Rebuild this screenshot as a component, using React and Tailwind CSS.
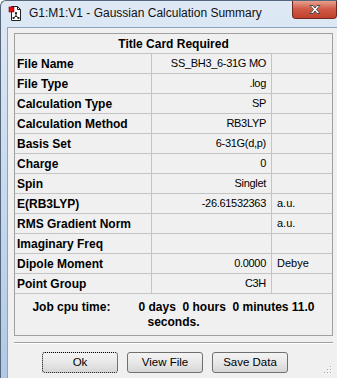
const ROWS = [
  { label: 'File Name', value: 'SS_BH3_6-31G MO', unit: '' },
  { label: 'File Type', value: '.log', unit: '' },
  { label: 'Calculation Type', value: 'SP', unit: '' },
  { label: 'Calculation Method', value: 'RB3LYP', unit: '' },
  { label: 'Basis Set', value: '6-31G(d,p)', unit: '' },
  { label: 'Charge', value: '0', unit: '' },
  { label: 'Spin', value: 'Singlet', unit: '' },
  { label: 'E(RB3LYP)', value: '-26.61532363', unit: 'a.u.' },
  { label: 'RMS Gradient Norm', value: '', unit: 'a.u.' },
  { label: 'Imaginary Freq', value: '', unit: '' },
  { label: 'Dipole Moment', value: '0.0000', unit: 'Debye' },
  { label: 'Point Group', value: 'C3H', unit: '' },
];

function FileIcon() {
  return (
    <svg width="16" height="16" viewBox="0 0 16 16">
      <path d="M3.5 1.5h6l3 3v11h-9z" fill="#fff" stroke="#222" />
      <path d="M9.5 1.5v3h3" fill="none" stroke="#222" />
      <rect x="1" y="2" width="5" height="5" fill="#e01010" stroke="#7a0000" strokeWidth="0.6" />
      <path d="M8 8v3M8 11l-2.5 2M8 11l2.5 2" fill="none" stroke="#111" />
      <circle cx="8" cy="8" r="1.1" fill="#111" />
      <circle cx="5.5" cy="13" r="1.1" fill="#111" />
      <circle cx="10.5" cy="13" r="1.1" fill="#111" />
    </svg>
  );
}

function CloseX() {
  return (
    <svg width="14" height="11" viewBox="0 0 14 11">
      <path
        d="M2 1.5h3l2 2.5 2-2.5h3l-3.5 4 3.5 4h-3l-2-2.5-2 2.5h-3l3.5-4z"
        fill="#fff"
        stroke="#4a4a4a"
        strokeWidth="1"
        strokeLinejoin="round"
      />
    </svg>
  );
}

function Grip() {
  const dots = [[8, 0], [8, 3], [5, 3], [8, 6], [5, 6], [2, 6]];
  return (
    <svg width="11" height="9" viewBox="0 0 11 9" className="absolute right-[4px] bottom-[3px]">
      {dots.map(([x, y], i) => (
        <g key={i}>
          <rect x={x + 1} y={y + 1} width="1" height="1" fill="#fff" />
          <rect x={x} y={y} width="1" height="1" fill="#a8a8a8" />
        </g>
      ))}
    </svg>
  );
}

function Btn({ children, focus }) {
  return (
    <button
      className={`w-[76px] h-[21px] rounded-[3px] border text-[11.5px] leading-none text-black bg-gradient-to-b from-[#f3f3f3] via-[#e8e8e8] to-[#d6d6d6] ${focus ? 'border-dotted border-black' : 'border-[#707070]'}`}
    >
      {children}
    </button>
  );
}

export default function App() {
  return (
    <div className="relative w-[337px] h-[378px] overflow-hidden rounded-tl-[6px] border-l border-t border-[#56677c] bg-gradient-to-b from-[#dfe9f5] via-[#c6d9ef] to-[#b1c9e7] font-['Liberation_Sans',Arial,sans-serif] text-black flex flex-col">
      <div className="h-[26px] shrink-0 flex items-start">
        <div className="ml-[7px] mt-[4px]">
          <FileIcon />
        </div>
        <div className="ml-[5px] mt-[5px] text-[12px] leading-[14px] text-[#111]">
          G1:M1:V1 - Gaussian Calculation Summary
        </div>
        <div className="ml-auto -mt-px w-[45px] h-[19px] rounded-b-[4px] border border-t-0 border-[#6e2a22] bg-gradient-to-b from-[#e9a998] via-[#cf5a47] to-[#c2402b] flex items-center justify-center">
          <CloseX />
        </div>
      </div>

      <div className="relative flex-1 ml-[6px] border-l border-t border-[#8ea3bd] bg-[#f0f0f0]">
        <div className="ml-[6px] mt-[5px] w-[319px] border border-[#a0a0a0]">
          <div className="h-[20px] border-b border-[#c4c4c4] flex items-center justify-center text-[12px] font-bold">
            Title Card Required
          </div>
          {ROWS.map((r) => (
            <div key={r.label} className="h-[20px] border-b border-[#c4c4c4] flex">
              <div className="w-[137px] border-r border-[#c4c4c4] pl-[2px] flex items-center text-[12px] font-bold">
                {r.label}
              </div>
              <div className="w-[120px] border-r border-[#c4c4c4] pr-[5px] flex items-center justify-end text-[11px] tracking-[-0.3px]">
                {r.value}
              </div>
              <div className="flex-1 pl-[5px] flex items-center text-[11px]">{r.unit}</div>
            </div>
          ))}
          <div className="h-[41px] pt-[6px] text-center text-[12px] font-bold leading-[15px]">
            <div className="whitespace-pre">
              {'Job cpu time:'}<span className="inline-block w-[28px]" />{'0 days  0 hours  0 minutes 11.0'}
            </div>
            <div>seconds.</div>
          </div>
        </div>

        <div className="ml-[6px] mt-[6px] w-[319px] h-[2px] border-t border-b border-t-[#a0a0a0] border-b-white" />

        <div className="ml-[34px] mt-[8px] flex gap-[9px]">
          <Btn focus>Ok</Btn>
          <Btn>View File</Btn>
          <Btn>Save Data</Btn>
        </div>

        <Grip />
      </div>
    </div>
  );
}
